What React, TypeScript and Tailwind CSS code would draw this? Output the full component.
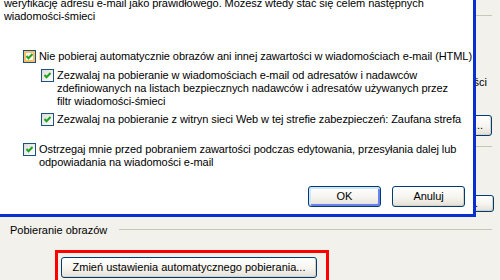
import React from "react";

function Check({ hover }: { hover?: boolean }) {
  return (
    <span
      className={
        hover
          ? "flex h-[13px] w-[13px] shrink-0 items-center justify-center border border-[#1c5180] bg-[linear-gradient(135deg,#fbe3a4,#f9c25c)] shadow-[inset_0_0_0_2px_#f8c064]"
          : "flex h-[13px] w-[13px] shrink-0 items-center justify-center border border-[#1c5180] bg-[linear-gradient(135deg,#dcdcd7,#ffffff)]"
      }
    >
      <span className={hover ? "flex h-[7px] w-[7px] items-center justify-center bg-[#f7f7f3]" : "flex h-[7px] w-[7px] items-center justify-center"}>
        <svg width="7" height="7" viewBox="0 0 7 7">
          <path d="M0.5 3 L2.5 5.2 L6.5 1" fill="none" stroke="#21a121" strokeWidth="2" />
        </svg>
      </span>
    </span>
  );
}

function XpButton({
  children,
  isDefault,
  className,
}: {
  children: React.ReactNode;
  isDefault?: boolean;
  className?: string;
}) {
  return (
    <button
      className={`flex shrink-0 items-center rounded-[3px] border border-[#003c74] bg-[linear-gradient(#ffffff,#f5f4ef_55%,#e3e0d5)] text-[11px] leading-[13px] text-black ${
        isDefault
          ? "shadow-[inset_1px_1px_0_1px_#cee7ff,inset_-1px_-1px_0_1px_#6982ee]"
          : "shadow-[inset_-1px_-1px_0_#d6d0c5]"
      } ${className ?? ""}`}
    >
      {children}
    </button>
  );
}

export default function App() {
  return (
    <div className="relative h-[280px] w-[500px] overflow-hidden bg-[#f2f1ec] font-['Liberation_Sans',Arial,sans-serif] text-[11px] text-black">
      {/* back dialog, mostly hidden behind the front one */}
      <div className="flex flex-col">
        <div className="ml-[300px] mr-[8px] mt-[15px] h-px bg-[#c9c6b8]" />
        <div className="mt-[60px] whitespace-nowrap pr-[13px] text-right leading-[13px]">
          wiadomości
        </div>
        <div className="mt-[26px] flex justify-end pr-[8px]">
          <XpButton className="h-[21px] w-[60px] justify-end pr-[8px]">Opcje...</XpButton>
        </div>
        <div className="ml-[300px] mr-[8px] mt-[10px] h-px bg-[#c9c6b8]" />
        <div className="mt-[48px] flex justify-end pr-[6px]">
          <XpButton className="h-[17px] w-[60px] justify-end pr-[15px]">Więcej...</XpButton>
        </div>
        <div className="mt-[12px] flex h-[13px] items-start pl-[10px]">
          <span className="whitespace-nowrap leading-[13px]">Pobieranie obrazów</span>
          <div className="ml-[12px] mr-[8px] mt-[5px] h-px flex-1 bg-[#c9c6b8]" />
        </div>
        <div className="ml-[55px] mt-[13px] h-[40px] w-[274px] border-[3px] border-[#ff0000] pl-[3px] pt-[4px]">
          <XpButton className="h-[21px] w-[256px] justify-center">
            Zmień ustawienia automatycznego pobierania...
          </XpButton>
        </div>
      </div>

      {/* front dialog */}
      <div className="absolute left-0 top-0 flex h-[217px] w-[476px] flex-col border-b-[3px] border-r-[3px] border-[#0a2fd0] bg-white tracking-[-0.07px]">
        <p className="-mt-[3px] whitespace-nowrap pl-[4px] leading-[13px]">
          weryfikację adresu e-mail jako prawidłowego. Możesz wtedy stać się celem następnych
          <br />
          wiadomości-śmieci
        </p>
        <div className="mt-[27px] flex items-start gap-[3px] pl-[23px]">
          <Check hover />
          <span className="whitespace-nowrap leading-[13px]">
            Nie pobieraj automatycznie obrazów ani innej zawartości w wiadomościach e-mail (HTML)
          </span>
        </div>
        <div className="mt-[6px] flex items-start gap-[3px] pl-[41px]">
          <Check />
          <span className="whitespace-nowrap leading-[13px]">
            Zezwalaj na pobieranie w wiadomościach e-mail od adresatów i nadawców
            <br />
            zdefiniowanych na listach bezpiecznych nadawców i adresatów używanych przez
            <br />
            filtr wiadomości-śmieci
          </span>
        </div>
        <div className="mt-[5px] flex items-start gap-[3px] pl-[41px]">
          <Check />
          <span className="whitespace-nowrap leading-[13px]">
            Zezwalaj na pobieranie z witryn sieci Web w tej strefie zabezpieczeń: Zaufana strefa
          </span>
        </div>
        <div className="mt-[17px] flex items-start gap-[3px] pl-[23px]">
          <Check />
          <span className="whitespace-nowrap leading-[13px]">
            Ostrzegaj mnie przed pobraniem zawartości podczas edytowania, przesyłania dalej lub
            <br />
            odpowiadania na wiadomości e-mail
          </span>
        </div>
        <div className="mb-[7px] mt-auto flex justify-end gap-[11px] pr-[8px]">
          <XpButton isDefault className="h-[21px] w-[73px] justify-center">
            OK
          </XpButton>
          <XpButton className="h-[21px] w-[73px] justify-center">Anuluj</XpButton>
        </div>
      </div>
    </div>
  );
}
